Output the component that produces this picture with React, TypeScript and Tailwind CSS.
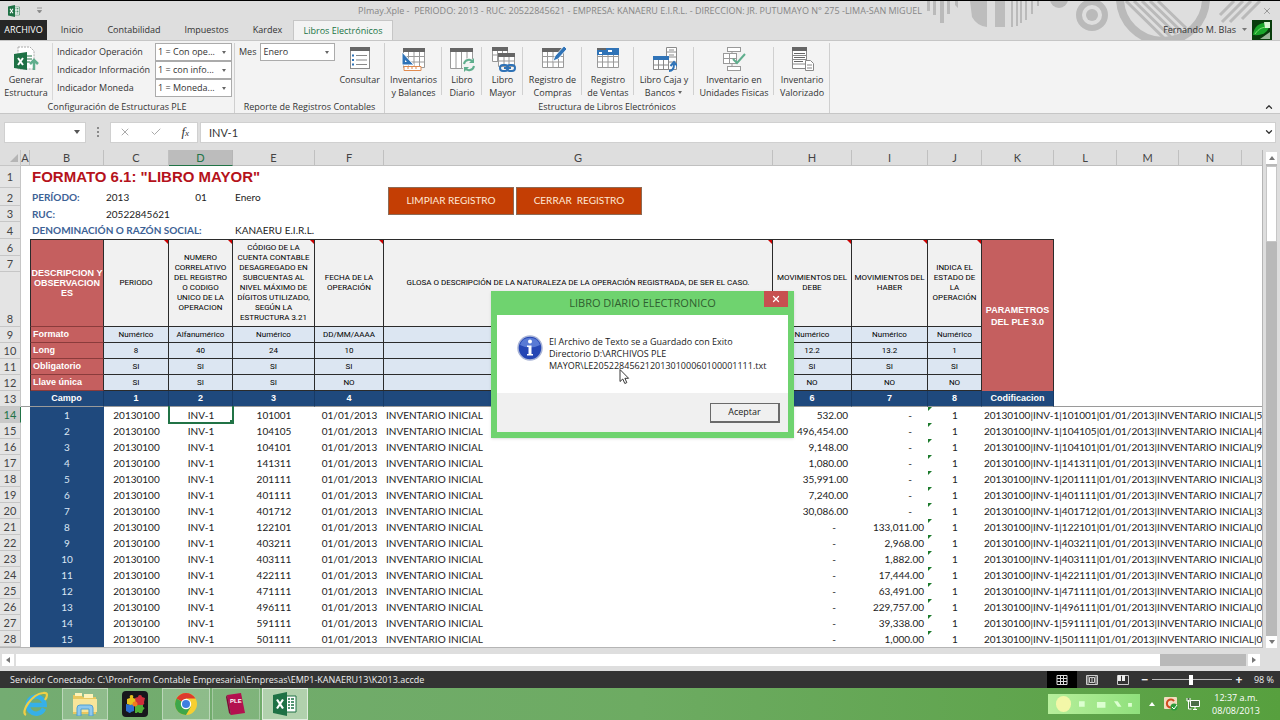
import React from "react";
import { Check, ChevronDown, ChevronUp, X } from "lucide-react";

type Row = {
  campo: number;
  cuenta: string;
  debe: string;
  haber: string;
  tail: string;
};

const App = () => {
  return (
    <div className="relative flex min-h-screen flex-col overflow-hidden bg-[#dedede] font-['Open_Sans',sans-serif] text-[9px] text-[#333]">
      <TitleBar />
      <Ribbon />
      <FormulaBar />
      <Sheet />
      <HorizontalScroll />
      <StatusBar />
      <TaskBar />
      <MessageBox />
      <svg
        className="absolute left-[619px] top-[369px] h-4 w-3"
        viewBox="0 0 12 16"
        aria-hidden="true"
      >
        <path
          d="M1 0.5V12.5L3.8 10L5.8 14.5L7.8 13.6L5.9 9.3H9.6Z"
          fill="#fff"
          stroke="#222"
          strokeWidth="0.9"
        />
      </svg>
    </div>
  );
};

export default App;

const TitleBar = () => {
  return (
    <header className="relative border-t border-black">
      <svg
        className="absolute right-0 top-0 h-[39px] w-[360px]"
        viewBox="0 0 360 39"
        fill="#bababa"
        aria-hidden="true"
      >
        <path d="M7 0h3v10H7zM13 0h3v14h-3zM20 0h4v22h-4zM27 0h3v13h-3zM35 0h3v7l-3-3z" />
        <path d="M46 0H67V26Q57 25 52 16L50 0ZM75 0H85V26H75Z" opacity=".95" />
        <path d="M91 0h2v26h-2zM96 0h2v25h-2zM100 0h2v22h-2zM105 0h2v19h-2zM111 0h2v13h-2zM117 0h2v5h-2z" />
        <circle cx="139" cy="-2" r="9" />
        <circle cx="172" cy="14" r="13" fill="none" stroke="#bababa" strokeWidth="6" />
        <circle cx="172" cy="14" r="6" />
        <circle cx="243" cy="-3" r="43" fill="none" stroke="#bababa" strokeWidth="8" />
        <g stroke="#bababa" strokeWidth="3" fill="none">
          <path d="M206 0L246 39M214 0L252 37M222 0L256 33M230 0L262 31M238 0L266 27" />
          <path d="M300 14L314 0M302 21L323 0M310 21L331 0M322 18L340 0" />
        </g>
      </svg>

      <div className="relative flex h-[19px] items-center">
        <div className="flex w-48 items-center gap-4 pl-2">
          <ExcelMark className="h-3 w-3" />
          <svg className="h-2 w-2" viewBox="0 0 8 8" aria-hidden="true">
            <path d="M1 1h5M1.500 3.500h4L3.500 6z" fill="#888" stroke="#888" strokeWidth=".8" />
          </svg>
        </div>
        <h1 className="flex-1 whitespace-pre text-center text-[#868686]">
          PImay.Xple -  PERIODO: 2013 - RUC: 20522845621 - EMPRESA: KANAERU E.I.R.L. - DIRECCION: JR. PUTUMAYO N° 275 -LIMA-SAN MIGUEL
        </h1>
        <div className="flex w-48 justify-end pr-2">
          <button aria-label="Cerrar">
            <X className="h-2.5 w-2.5 text-[#8a8a8a]" />
          </button>
        </div>
      </div>

      <nav className="relative flex h-5 items-end">
        <a href="#archivo" className="flex h-5 w-[47px] items-center justify-center bg-[#262626] text-white">
          ARCHIVO
        </a>
        <a href="#inicio" className="flex h-5 w-[50px] items-center justify-center">Inicio</a>
        <a href="#contabilidad" className="flex h-5 w-[74px] items-center justify-center">Contabilidad</a>
        <a href="#impuestos" className="flex h-5 w-[71px] items-center justify-center">Impuestos</a>
        <a href="#kardex" className="flex h-5 w-[51px] items-center justify-center">Kardex</a>
        <a
          href="#libros"
          className="flex h-5 w-[100px] items-center justify-center border-x border-t border-[#c6c6c6] bg-[#f3f3f3] text-[#217346]"
        >
          Libros Electrónicos
        </a>
        <div className="ml-auto flex items-center gap-1 pr-2">
          <button className="flex items-center gap-1">
            Fernando M. Blas
            <svg className="h-1 w-2" viewBox="0 0 8 4" aria-hidden="true">
              <path d="M2 0h5L4.500 3z" fill="#777" />
            </svg>
          </button>
          <svg className="h-5 w-5" viewBox="0 0 20 20" aria-hidden="true">
            <rect width="20" height="20" fill="#083d0c" />
            <path d="M1 15C2 6 8 2 17 3C18 11 12 16 1 15Z" fill="#19a52a" />
            <path d="M3 14C7 8 11 7 17 7" stroke="#7be26f" fill="none" />
            <path d="M12 2h6v6h-5z" fill="#d8f5d3" />
            <path d="M8 19L18 12V19Z" fill="#9ab59a" />
          </svg>
        </div>
      </nav>
    </header>
  );
};

const ComboBox = ({ id, value }: { id: string; value: string }) => (
  <div className="relative">
    <select
      id={id}
      className="h-[18px] w-full appearance-none border border-[#ababab] bg-white pl-0.5 pr-3 text-[9px] text-[#333] outline-none"
    >
      <option>{value}</option>
    </select>
    <svg className="pointer-events-none absolute right-1 top-2 h-1 w-2" viewBox="0 0 8 4" aria-hidden="true">
      <path d="M2 0h4L4 3z" fill="#666" />
    </svg>
  </div>
);

const Ribbon = () => {
  return (
    <section className="flex h-[74px] border-b border-t border-[#c6c6c6] bg-[#f3f3f3]">
      <div className="mt-0.5 flex w-[235px] flex-col border-r border-[#cfcfcf]">
        <div className="flex flex-1">
          <button className="flex w-[53px] flex-col items-center gap-px border-r border-[#d8d8d8] pt-[3px]">
            <svg className="h-[26px] w-[26px]" viewBox="0 0 26 26" aria-hidden="true">
              <path d="M5 1h12l4 4v18H5z" fill="#fff" stroke="#aaa" strokeDasharray="2 1" />
              <path d="M14 10h5M14 13h5M14 16h3" stroke="#217346" />
              <path d="M1 8l13-2v18L1 22z" fill="#1e7145" />
              <path d="M5 12l5 7M10 12l-5 7" stroke="#fff" strokeWidth="2" />
              <path d="M21 24V14M17 18l4-4 4 4" stroke="#5fae8d" strokeWidth="2.500" fill="none" />
            </svg>
            <span className="leading-[13px]">Generar Estructura</span>
          </button>
          <div className="grid flex-1 grid-cols-[98px_1fr] content-start items-center pl-1 pr-0.5">
            <label htmlFor="operacion">Indicador Operación</label>
            <ComboBox id="operacion" value="1 = Con ope..." />
            <label htmlFor="informacion">Indicador Información</label>
            <ComboBox id="informacion" value="1 = con info..." />
            <label htmlFor="moneda">Indicador Moneda</label>
            <ComboBox id="moneda" value="1 = Moneda..." />
          </div>
        </div>
        <p className="text-center leading-[13px]">Configuración de Estructuras PLE</p>
      </div>

      <div className="mt-0.5 flex w-[150px] flex-col border-r border-[#cfcfcf]">
        <div className="flex flex-1">
          <div className="flex items-center gap-1 self-start pl-1">
            <label htmlFor="mes">Mes</label>
            <div className="w-[75px]">
              <ComboBox id="mes" value="Enero" />
            </div>
          </div>
          <button className="flex flex-1 flex-col items-center gap-px pt-[3px]">
            <svg className="h-[26px] w-[26px]" viewBox="0 0 26 26" aria-hidden="true">
              <rect x="3.500" y="1.500" width="19" height="21" fill="#fff" stroke="#8a8a8a" />
              <path d="M3 1h20v4H3z" fill="#666" />
              <path d="M9 9.500h11M9 14h11M9 18.500h11" stroke="#888" />
              <path d="M5 9.500h2M5 14h2M5 18.500h2" stroke="#2f73b7" strokeWidth="2" />
            </svg>
            <span className="leading-[13px]">Consultar</span>
          </button>
        </div>
        <p className="text-center leading-[13px]">Reporte de Registros Contables</p>
      </div>

      <div className="mt-0.5 flex w-[445px] flex-col border-r border-[#cfcfcf]">
        <div className="flex flex-1">
          <BookButton width="w-[57px]" lines={["Inventarios", "y Balances"]}>
            <TableGrid />
            <path d="M1 6v13h12z" fill="#2f73b7" stroke="#fff" />
            <path d="M4 14v2h2z" fill="#fff" />
            <path d="M3 20.500h17v4H3zM7 20v3M11 20v3M15 20v3" fill="#fff" stroke="#e08a4f" />
          </BookButton>
          <BookButton width="w-10" lines={["Libro", "Diario"]}>
            <path d="M1.500 3.500h22v19h-22zM7 4v18M12.500 4v18M18 4v18" fill="#fff" stroke="#999" />
            <path d="M1 2h23v4H1z" fill="#666" />
            <circle cx="20" cy="19" r="7" fill="#f3f3f3" />
            <path d="M15 18a5 5 0 0 1 9-2M25 20a5 5 0 0 1-9 2" fill="none" stroke="#5fae8d" strokeWidth="2" />
            <path d="M25 12v5h-5zM15 26v-5h5z" fill="#5fae8d" />
          </BookButton>
          <BookButton width="w-[41px]" lines={["Libro", "Mayor"]}>
            <path d="M2.500 2.500h15v13h-15zM7.500 3v12M12.500 3v12M2 9h15" fill="#fff" stroke="#999" />
            <path d="M2 1h16v4H2z" fill="#666" />
            <path d="M8.500 8.500h16v12h-16zM14 9v11M19 9v11M8 15h16" fill="#fff" stroke="#999" />
            <path d="M8 7h17v4H8z" fill="#666" />
            <g fill="none" stroke="#2f73b7" strokeWidth="2">
              <rect x="10" y="19" width="8" height="6" rx="3" />
              <rect x="17" y="19" width="8" height="6" rx="3" />
              <path d="M14 22h7" />
            </g>
          </BookButton>
          <BookButton width="w-[59px]" lines={["Registro de", "Compras"]}>
            <TableGrid />
            <path d="M13 15l2-5L24 0l3 3-9 10z" fill="#2f73b7" stroke="#fff" strokeWidth=".8" />
          </BookButton>
          <BookButton width="w-[52px]" lines={["Registro", "de Ventas"]}>
            <TableGrid />
            <path d="M2 9V4h9V2h13v7z" fill="#2f73b7" />
            <path d="M4 6h3v2H4zM13 4h4v2h-4z" fill="#fff" />
          </BookButton>
          <BookButton width="w-[60px]" lines={["Libro Caja y", "Bancos"]} arrow>
            <path d="M15.500 1.500h10v22h-10zM15 6h10M15 11h10M15 16h10M18 4h5M18 9h5" fill="#fff" stroke="#8a8a8a" />
            <path d="M2.500 10.500h15v13h-15zM7.500 11v12M12.500 11v12M2 19h15" fill="#fff" stroke="#888" />
            <path d="M2 10h16v4H2z" fill="#2f73b7" />
            <path d="M18 25q5 0 5-7M19.500 20l3.500-4 3.500 4" fill="none" stroke="#2f73b7" strokeWidth="2" />
          </BookButton>
          <BookButton width="w-20" lines={["Inventario en", "Unidades Fisicas"]}>
            <g fill="#fff" stroke="#999">
              <rect x="6.500" y="1.500" width="13" height="4" />
              <rect x="2.500" y="7.500" width="13" height="10" />
              <rect x="6.500" y="20.500" width="13" height="4" />
              <path d="M2 12.500h13M8.500 8v9M11 6v2M11 18v2" />
            </g>
            <path d="M12 13l4 4 8-9" fill="none" stroke="#5fae8d" strokeWidth="2" />
          </BookButton>
          <BookButton width="w-14" lines={["Inventario", "Valorizado"]} last>
            <path d="M3.500 1.500h14v21h-14zM3 9.500h14M3 13.500h14M3 18h14" fill="#fff" stroke="#888" />
            <path d="M3 1h15v4H3zM5 7h11v1H5zM5 11h11v1H5zM5 15h9v1H5z" fill="#666" />
            <path d="M16.500 14.500h5l3 3v7h-8zM18 19h5M18 22h5" fill="#fff" stroke="#888" />
          </BookButton>
        </div>
        <p className="text-center leading-[13px]">Estructura de Libros Electrónicos</p>
      </div>

      <button className="ml-auto mr-1.5 self-end pb-px" aria-label="Contraer la cinta">
        <ChevronUp className="h-2.5 w-2.5" strokeWidth={3} />
      </button>
    </section>
  );
};

const TableGrid = () => (
  <>
    <path d="M2.500 3.500h21v18h-21zM7.500 4v17M13 4v17M18.500 4v17M2 10.500h21M2 16h21" fill="#fff" stroke="#999" />
    <path d="M2 2h22v4H2z" fill="#666" />
  </>
);

const BookButton = ({
  width,
  lines,
  arrow,
  last,
  children,
}: {
  width: string;
  lines: string[];
  arrow?: boolean;
  last?: boolean;
  children: React.ReactNode;
}) => (
  <button className={`relative flex ${width} shrink-0 flex-col items-center whitespace-nowrap pt-[3px]`}>
    <svg className="mb-px h-[26px] w-[26px]" viewBox="0 0 26 26" aria-hidden="true">
      {children}
    </svg>
    <span className="leading-[13px]">{lines[0]}</span>
    <span className="flex items-center gap-0.5 leading-[13px]">
      {lines[1]}
      {arrow && (
        <svg className="h-1 w-1.5" viewBox="0 0 6 4" aria-hidden="true">
          <path d="M1 0h4L3 3z" fill="#666" />
        </svg>
      )}
    </span>
    {!last && <span className="absolute right-0 top-1 h-12 w-px bg-[#d0d0d0]"></span>}
  </button>
);

const FormulaBar = () => {
  return (
    <section className="flex h-9 items-center gap-2 px-1">
      <div className="flex h-[21px] w-[82px] items-center border border-[#d0d0d0] bg-white">
        <input aria-label="Cuadro de nombres" className="w-0 flex-1 outline-none" />
        <button aria-label="Nombres" className="px-1">
          <svg className="h-1 w-2" viewBox="0 0 8 4" aria-hidden="true">
            <path d="M1 0h6L4 4z" fill="#555" />
          </svg>
        </button>
      </div>
      <svg className="h-3 w-2" viewBox="0 0 8 12" aria-hidden="true">
        <path d="M3 1h2v2H3zM3 5h2v2H3zM3 9h2v2H3z" fill="#8a8a8a" />
      </svg>
      <div className="flex flex-1 gap-0.5">
        <div className="flex h-[21px] w-[88px] items-center justify-between border border-[#d0d0d0] bg-white px-2">
          <button aria-label="Cancelar">
            <X className="h-3 w-3 text-[#aaa]" />
          </button>
          <button aria-label="Introducir">
            <Check className="h-3 w-3 text-[#aaa]" />
          </button>
          <button className="font-['Liberation_Serif',serif] text-[13px] italic leading-4">
            f<span className="text-[9px]">x</span>
          </button>
        </div>
        <div className="flex h-[21px] flex-1 items-center border border-[#d0d0d0] bg-white">
          <input
            aria-label="Barra de fórmulas"
            defaultValue="INV-1"
            className="h-full w-0 flex-1 pl-2 font-['Lato',sans-serif] text-[11px] outline-none"
          />
          <button aria-label="Expandir" className="px-px">
            <ChevronDown className="h-2.5 w-2.5" strokeWidth={3} />
          </button>
        </div>
      </div>
    </section>
  );
};

const RowNumber = ({ n, active }: { n: number; active?: boolean }) => (
  <th
    scope="row"
    className={`border-b border-r p-0 text-center text-[11px] font-normal leading-[15px] ${
      n === 1 ? "align-middle" : "align-bottom"
    } ${
      active
        ? "border-b-[#c9c9c9] border-r-[#217346] bg-[#c9c9c9] text-[#217346]"
        : "border-[#c6c6c6] bg-[#e4e4e4] text-[#444]"
    }`}
  >
    {n}
  </th>
);

const labelClass = "p-0 pl-0.5 text-left text-[10px] leading-[15px] font-bold text-[#3d6296]";
const headClass =
  "relative border-b border-r border-t border-[#2b2b2b] bg-[#f1f1f1] px-px py-0 text-center align-middle font-['Roboto',sans-serif] text-[8px] font-normal leading-[10px] text-black";
const sideClass =
  "border-b border-l border-r border-b-[#8a3b3b] border-l-[#2b2b2b] border-r-[#2b2b2b] bg-[#c55f5f] p-0 pl-0.5 text-left font-['Liberation_Sans',sans-serif] text-[9px] font-bold leading-[15px] text-white";
const specClass =
  "border-b border-r border-[#2b2b2b] bg-[#dce6f2] p-0 text-center font-['Roboto',sans-serif] text-[8px] leading-[15px] text-black";
const campoClass =
  "border-b border-r border-b-[#9a9a9a] border-r-[#173a66] bg-[#1f497d] p-0 text-center font-['Liberation_Sans',sans-serif] text-[9px] font-bold leading-[15px] text-white";

const Sheet = () => {
  return (
    <main className="flex font-['Lato',sans-serif]">
      <div className="min-w-0 flex-1 border-b border-r border-[#b5b5b5] bg-white">
        <table className="w-full table-fixed border-separate border-spacing-0 text-[10px] text-[#222]">
          <colgroup>
            <col className="w-[21px]" />
            <col className="w-[9px]" />
            <col className="w-[74px]" />
            <col className="w-[65px]" />
            <col className="w-[64px]" />
            <col className="w-[82px]" />
            <col className="w-[69px]" />
            <col className="w-[389px]" />
            <col className="w-[79px]" />
            <col className="w-[76px]" />
            <col className="w-[54px]" />
            <col className="w-[72px]" />
            <col className="w-[63px]" />
            <col className="w-[62px]" />
            <col className="w-[63px]" />
            <col />
          </colgroup>
          <thead>
            <tr className="h-4">
              <td className="border-b border-r border-[#c6c6c6] bg-[#dedede] p-0">
                <svg className="ml-auto h-3 w-3" viewBox="0 0 12 12" aria-hidden="true">
                  <path d="M10 2v8H2z" fill="#b5b5b5" />
                </svg>
              </td>
              {columns.map((col) => (
                <th
                  key={col}
                  scope="col"
                  className={`border-b border-r p-0 text-center text-[11px] font-normal leading-[15px] ${
                    col === "D"
                      ? "border-b-[#217346] border-r-[#b5b5b5] bg-[#bcbcbc] text-[#217346]"
                      : "border-[#c0c0c0] bg-[#dedede] text-[#444]"
                  }`}
                >
                  {col}
                </th>
              ))}
              <td className="border-b border-[#c0c0c0] bg-[#dedede] p-0"></td>
            </tr>
          </thead>
          <tbody>
            <tr className="h-[22px]">
              <RowNumber n={1} />
              <td></td>
              <td
                colSpan={5}
                className="whitespace-nowrap p-0 pl-0.5 align-middle font-['Liberation_Sans',sans-serif] text-[15px] font-bold leading-5 text-[#b5121b]"
              >
                FORMATO 6.1: "LIBRO MAYOR"
              </td>
              <td rowSpan={4} className="p-0 pb-1 pl-1 align-middle">
                <div className="flex gap-0.5">
                  <button className="h-7 w-[126px] border border-[#8d6a55] bg-[#c43e04] text-[10px] text-[#ffe9d6]">
                    LIMPIAR REGISTRO
                  </button>
                  <button className="h-7 w-[126px] whitespace-pre border border-[#8d6a55] bg-[#c43e04] text-[10px] text-[#ffe9d6]">
                    CERRAR  REGISTRO
                  </button>
                </div>
              </td>
              <td colSpan={8}></td>
            </tr>
            <tr className="h-[18px]">
              <RowNumber n={2} />
              <td></td>
              <th className={labelClass}>PERÍODO:</th>
              <td className="p-0 pl-0.5">2013</td>
              <td className="p-0 text-center">01</td>
              <td className="p-0 pl-0.5">Enero</td>
              <td colSpan={9}></td>
            </tr>
            <tr className="h-4">
              <RowNumber n={3} />
              <td></td>
              <th className={labelClass}>RUC:</th>
              <td className="p-0 pl-0.5">20522845621</td>
              <td colSpan={11}></td>
            </tr>
            <tr className="h-[17px]">
              <RowNumber n={4} />
              <td></td>
              <th colSpan={3} className={`${labelClass} whitespace-nowrap`}>
                DENOMINACIÓN O RAZÓN SOCIAL:
              </th>
              <td colSpan={2} className="p-0 pl-0.5">KANAERU E.I.R.L.</td>
              <td colSpan={8}></td>
            </tr>
            <tr className="h-[17px]">
              <RowNumber n={6} />
              <td rowSpan={3}></td>
              <th
                rowSpan={3}
                className="border border-[#2b2b2b] border-b-[#8a3b3b] bg-[#c55f5f] p-0 text-center align-middle font-['Liberation_Sans',sans-serif] text-[9px] font-bold leading-[10px] text-white"
              >
                DESCRIPCION Y
                <br />
                OBSERVACION
                <br />
                ES
              </th>
              {headings.map((lines, i) => (
                <th key={i} rowSpan={3} className={headClass}>
                  {lines.map((line) => (
                    <span key={line} className="block whitespace-nowrap">
                      {line}
                    </span>
                  ))}
                  <svg className="absolute right-0 top-0 h-1 w-1" viewBox="0 0 4 4" aria-hidden="true">
                    <path d="M0 0h4v4z" fill="#c00" />
                  </svg>
                </th>
              ))}
              <th
                rowSpan={7}
                className="border-r border-t border-[#2b2b2b] bg-[#c55f5f] p-0 text-center align-middle font-['Liberation_Sans',sans-serif] text-[9px] font-bold leading-3 text-white"
              >
                PARAMETROS
                <br />
                DEL PLE 3.0
              </th>
              <td colSpan={4} rowSpan={7}></td>
            </tr>
            <tr className="h-4">
              <RowNumber n={7} />
            </tr>
            <tr className="h-[55px]">
              <RowNumber n={8} />
            </tr>
            {specs.map((spec) => (
              <tr key={spec.n} className="h-4">
                <RowNumber n={spec.n} />
                <td></td>
                <th scope="row" className={sideClass}>
                  {spec.label}
                </th>
                {spec.values.map((value, i) => (
                  <td key={i} className={specClass}>
                    {value}
                  </td>
                ))}
              </tr>
            ))}
            <tr className="h-4">
              <RowNumber n={13} />
              <td className="border-b border-[#9a9a9a]"></td>
              <th className={campoClass}>Campo</th>
              {["1", "2", "3", "4", "5", "6", "7", "8"].map((n) => (
                <td key={n} className={campoClass}>
                  {n}
                </td>
              ))}
              <td className={campoClass}>Codificacion</td>
              <td colSpan={4} className="border-b border-[#9a9a9a]"></td>
            </tr>
            {rows.map((row, i) => (
              <tr key={row.campo} className="h-4 leading-4">
                <RowNumber n={14 + i} active={i === 0} />
                <td></td>
                <td className="bg-[#1f497d] p-0 text-center text-[#dbe6f4]">{row.campo}</td>
                <td className="p-0 text-center">20130100</td>
                <td className="relative p-0 text-center">
                  INV-1
                  {i === 0 && (
                    <span className="absolute -left-px -top-px h-[18px] w-[66px] border-2 border-t-0 border-[#217346]">
                      <span className="absolute -bottom-0.5 -right-0.5 h-1 w-1 bg-[#217346]"></span>
                    </span>
                  )}
                </td>
                <td className="p-0 text-center">{row.cuenta}</td>
                <td className="p-0 text-center">01/01/2013</td>
                <td className="p-0 pl-0.5">INVENTARIO INICIAL</td>
                <td className={`p-0 text-right ${row.debe === "-" ? "pr-4" : "pr-1"}`}>{row.debe}</td>
                <td className={`p-0 text-right ${row.haber === "-" ? "pr-4" : "pr-1"}`}>{row.haber}</td>
                <td className="relative p-0 text-center">
                  1
                  <svg className="absolute left-0 top-0 h-1 w-1" viewBox="0 0 4 4" aria-hidden="true">
                    <path d="M0 0h4L0 4z" fill="#1c7a2c" />
                  </svg>
                </td>
                <td colSpan={5} className="overflow-hidden whitespace-nowrap p-0 pl-0.5">
                  20130100|INV-1|{row.cuenta}|01/01/2013|INVENTARIO INICIAL|{row.tail}
                </td>
              </tr>
            ))}
          </tbody>
        </table>
      </div>

      <div className="flex w-[17px] flex-col px-[3px] pt-0.5">
        <button aria-label="Subir" className="flex h-3 items-center justify-center bg-white">
          <svg className="h-1 w-2" viewBox="0 0 8 4" aria-hidden="true">
            <path d="M1 4h6L4 0z" fill="#777" />
          </svg>
        </button>
        <div className="flex-1 bg-[#b9b9b9] pt-0.5">
          <div className="h-[76px] border border-[#c6c6c6] bg-white"></div>
        </div>
        <button aria-label="Bajar" className="flex h-3 items-center justify-center bg-white">
          <svg className="h-1 w-2" viewBox="0 0 8 4" aria-hidden="true">
            <path d="M1 0h6L4 4z" fill="#777" />
          </svg>
        </button>
      </div>
    </main>
  );
};

const HorizontalScroll = () => {
  return (
    <div className="flex h-[23px] items-center gap-0.5 pl-0.5 pr-5">
      <button aria-label="Izquierda" className="flex h-3 w-3 items-center justify-center bg-white">
        <svg className="h-2 w-1" viewBox="0 0 4 8" aria-hidden="true">
          <path d="M4 1v6L0 4z" fill="#777" />
        </svg>
      </button>
      <div className="h-3 flex-1 bg-[#b9b9b9]">
        <div className="h-full w-[93%] bg-white"></div>
      </div>
      <button aria-label="Derecha" className="flex h-3 w-3 items-center justify-center bg-white">
        <svg className="h-2 w-1" viewBox="0 0 4 8" aria-hidden="true">
          <path d="M0 1v6l4-3z" fill="#777" />
        </svg>
      </button>
    </div>
  );
};

const StatusBar = () => {
  return (
    <footer className="flex h-[17px] items-center bg-[#333] pl-2.5 pr-1.5 text-[#eee]">
      <span>Servidor Conectado: C:\PronForm Contable Empresarial\Empresas\EMP1-KANAERU13\K2013.accde</span>
      <div className="ml-auto flex h-full items-center">
        <button aria-label="Normal" className="flex h-full w-[30px] items-center justify-center bg-black">
          <svg className="h-3 w-3" viewBox="0 0 12 12" aria-hidden="true">
            <path d="M1 1.500h10v9H1zM4.500 1v10M7.500 1v10M1 4.500h10M1 7.500h10" fill="none" stroke="#ddd" />
          </svg>
        </button>
        <button aria-label="Diseño de página" className="flex w-[31px] justify-center">
          <svg className="h-3 w-3" viewBox="0 0 12 12" aria-hidden="true">
            <path d="M.5 1.500h11v9H.5zM3.500 3.500h5v5h-5zM5 5h2M5 7h2M2 1v10M10 1v10" fill="none" stroke="#ccc" />
          </svg>
        </button>
        <button aria-label="Salto de página" className="flex w-[30px] justify-center">
          <svg className="h-3 w-3" viewBox="0 0 12 12" aria-hidden="true">
            <path d="M.5 1.500h11v9H.5z" fill="none" stroke="#ccc" />
            <path d="M1 1h3v6H1zM5 1h3v6H5z" fill="#eee" />
          </svg>
        </button>
        <button aria-label="Alejar" className="w-3.5 text-[12px] font-bold leading-4">−</button>
        <input
          type="range"
          aria-label="Zoom"
          defaultValue={49}
          className="h-4 w-20 appearance-none bg-transparent [&::-webkit-slider-runnable-track]:h-px [&::-webkit-slider-runnable-track]:bg-[#bbb] [&::-webkit-slider-thumb]:-mt-1 [&::-webkit-slider-thumb]:h-2.5 [&::-webkit-slider-thumb]:w-1 [&::-webkit-slider-thumb]:appearance-none [&::-webkit-slider-thumb]:bg-white"
        />
        <button aria-label="Acercar" className="w-3.5 text-[12px] font-bold leading-4">+</button>
        <span className="ml-2">98 %</span>
      </div>
    </footer>
  );
};

const TaskBar = () => {
  return (
    <nav className="flex h-8 items-stretch gap-0.5 bg-linear-to-r from-[#74ac72] via-[#6dab62] to-[#57a03e] pl-3">
      <button aria-label="Internet Explorer" className="flex w-12 items-center justify-center">
        <svg className="h-7 w-7" viewBox="0 0 28 28" aria-hidden="true">
          <path d="M22 18.500A8.500 8.500 0 1 1 22.700 15H8" fill="none" stroke="#36b0e8" strokeWidth="4.500" />
          <path d="M4 25C-2 22 10 4 21 3C27 2 25 7 23 10" fill="none" stroke="#f0cf45" strokeWidth="2.200" />
        </svg>
      </button>
      <button aria-label="Explorador" className="flex w-[46px] items-center justify-center border border-white/40 bg-white/20">
        <svg className="h-6 w-7" viewBox="0 0 28 24" aria-hidden="true">
          <path d="M2 3h8l2 2h13v17H2z" fill="#e9c75e" />
          <path d="M4 1h7v3H4zM13 2h9v4h-9z" fill="#fff3b8" />
          <path d="M2 7h24v13H2z" fill="#f8e59a" />
          <path d="M6 24v-8q0-3 3-3h10q3 0 3 3v8h-4v-7h-8v7z" fill="#8ec8ee" stroke="#4f9fd4" />
        </svg>
      </button>
      <button aria-label="Contable" className="flex w-[50px] items-center justify-center">
        <svg className="h-[26px] w-[26px]" viewBox="0 0 26 26" aria-hidden="true">
          <rect width="26" height="26" rx="4" fill="#17171c" />
          <path d="M5 8l3-1q-1-3 1.500-3t1.500 3l3 1v5l-3 1q-1 2-3 0l-3-1z" fill="#e6c21f" />
          <path d="M13 7l3-1q0-2 2-2t2 2l3 1-1 4q1 2-1 3h-7z" fill="#cf2f3a" />
          <path d="M4 13l4 1q2-1 4 0v6l-3 1q-1 2-3 0l-2-1z" fill="#2c6fd0" />
          <path d="M13 14h8v2q3 1 0 3l-1 3h-3q-1-2-2 0h-2z" fill="#4fae36" />
          <circle cx="13" cy="13" r="2.500" fill="#f07b1f" />
        </svg>
      </button>
      <button aria-label="Chrome" className="flex w-12 items-center justify-center border border-white/40 bg-white/20">
        <svg className="h-6 w-6" viewBox="0 0 24 24" aria-hidden="true">
          <circle cx="12" cy="12" r="11" fill="#f7cf31" />
          <path d="M12 12L2.500 6.500A11 11 0 0 1 21.500 6.500H12Z" fill="#dd3b2e" />
          <path d="M12 12L2.500 6.500A11 11 0 0 0 12 23L16.800 14.700Z" fill="#3ea64a" />
          <circle cx="12" cy="12" r="5.200" fill="#fff" />
          <circle cx="12" cy="12" r="4" fill="#3f7fe0" />
        </svg>
      </button>
      <button aria-label="PLE" className="flex w-12 items-center justify-center border border-white/30 bg-white/10">
        <svg className="h-6 w-6" viewBox="0 0 24 24" aria-hidden="true">
          <path d="M3 3L17 1L21 21L7 23Z" fill="#b3114f" />
          <path d="M3 3L7 23L5 21L2 5Z" fill="#7d0a36" />
          <text x="6" y="11" fontSize="6" fontWeight="bold" fill="#fff" fontFamily="Liberation Sans, sans-serif">
            PLE
          </text>
        </svg>
      </button>
      <button aria-label="Excel" className="flex w-[46px] items-center justify-center border border-white/60 bg-white/45">
        <ExcelMark className="h-6 w-6" />
      </button>

      <div className="ml-auto flex items-center gap-2 pr-4">
        <div className="flex h-5 w-[92px] items-center gap-2 bg-linear-to-r from-[#b7ef9c] to-[#8fe07c] px-2">
          <span className="h-4 w-4 rounded-full bg-[#f3f7a8]"></span>
          <svg className="h-3 w-14" viewBox="0 0 56 12" fill="#dcffd0" aria-hidden="true">
            <path d="M0 3h6v6H0zM19 4h9v6h-9zM37 3h4l4 6h-4zM52 5h4v4h-4z" />
          </svg>
        </div>
        <svg className="h-1 w-2" viewBox="0 0 8 4" aria-hidden="true">
          <path d="M1 4h6L4 0z" fill="#fff" />
        </svg>
        <svg className="h-3.5 w-3.5" viewBox="0 0 14 14" aria-hidden="true">
          <rect width="13" height="12" rx="1" fill="#f2dcc0" />
          <path d="M10 4A4 4 0 1 0 10 9" fill="none" stroke="#cf4a1f" strokeWidth="2" />
          <circle cx="10" cy="10" r="3.500" fill="#2d9a3b" />
          <path d="M8 10l2 2 3-4" fill="none" stroke="#fff" />
        </svg>
        <svg className="h-3.5 w-3.5" viewBox="0 0 14 14" aria-hidden="true">
          <path d="M4.500 3.500h9v6h-9zM7 12.500h4M9 10v2M2.500 3v9h3M1 1v3h3V1" fill="#4c6e47" stroke="#fff" />
        </svg>
        <div className="w-14 text-center leading-[13px] text-white">
          12:37 a.m.
          <br />
          08/08/2013
        </div>
      </div>
    </nav>
  );
};

const MessageBox = () => {
  return (
    <div
      role="dialog"
      aria-labelledby="dialog-title"
      className="absolute left-[491px] top-[291px] w-[303px] bg-[#6fd36f] px-1.5 pb-1.5 shadow-sm"
    >
      <div className="relative flex h-6 items-center justify-center">
        <h2 id="dialog-title" className="text-[11px] text-[#2f5f2f]">LIBRO DIARIO ELECTRONICO</h2>
        <button
          aria-label="Cerrar"
          className="absolute right-0 top-0 flex h-4 w-6 items-center justify-center bg-[#c75050]"
        >
          <X className="h-2.5 w-2.5 text-white" strokeWidth={3} />
        </button>
      </div>
      <div className="flex h-[78px] gap-1.5 bg-white pl-5 pt-5">
        <svg className="h-[26px] w-[26px] shrink-0" viewBox="0 0 26 26" aria-hidden="true">
          <circle cx="13" cy="13" r="12" fill="#2546b4" stroke="#a9b4d6" strokeWidth="1.500" />
          <path d="M3 10a10.500 10.500 0 0 1 20 0q-10 5-20 0z" fill="#6f90e3" opacity=".7" />
          <circle cx="13" cy="6.500" r="2" fill="#fff" />
          <path d="M10 10.500h4.500V19H16v1.500h-6V19h1.500v-7H10z" fill="#fff" />
        </svg>
        <p className="pt-px leading-3 text-[#222]">
          El Archivo de Texto se a Guardado con Exito
          <br />
          Directorio D:\ARCHIVOS PLE
          <br />
          MAYOR\LE2052284562120130100060100001111.txt
        </p>
      </div>
      <div className="flex h-[39px] items-center justify-end bg-[#f0f0f0] pr-2">
        <button className="h-5 w-[70px] border-b-2 border-l border-r-2 border-t border-[#6a6a6a] bg-[#f0f0f0] text-[#222]">
          Aceptar
        </button>
      </div>
    </div>
  );
};

const ExcelMark = ({ className }: { className: string }) => (
  <svg className={className} viewBox="0 0 24 24" aria-hidden="true">
    <path d="M12 4h11v16H12z" fill="#fff" stroke="#1e7145" />
    <path d="M15 7h2M15 10h2M15 13h2M15 16h2M18 7h3M18 10h3M18 13h3M18 16h3" stroke="#1e7145" strokeWidth="1.500" />
    <path d="M0 3L14 0V24L0 21Z" fill="#1e7145" />
    <path d="M4 7.500L10 16.500M10 7.500L4 16.500" stroke="#fff" strokeWidth="2.200" />
  </svg>
);

const columns = ["A", "B", "C", "D", "E", "F", "G", "H", "I", "J", "K", "L", "M", "N"];

const headings = [
  ["PERIODO"],
  ["NUMERO", "CORRELATIVO", "DEL REGISTRO", "O CODIGO", "UNICO DE LA", "OPERACION"],
  [
    "CÓDIGO DE LA",
    "CUENTA CONTABLE",
    "DESAGREGADO EN",
    "SUBCUENTAS AL",
    "NIVEL MÁXIMO DE",
    "DÍGITOS UTILIZADO,",
    "SEGÚN LA",
    "ESTRUCTURA 3.21",
  ],
  ["FECHA DE LA", "OPERACIÓN"],
  ["GLOSA O DESCRIPCIÓN DE LA NATURALEZA DE LA OPERACIÓN REGISTRADA, DE SER EL CASO."],
  ["MOVIMIENTOS DEL", "DEBE"],
  ["MOVIMIENTOS DEL", "HABER"],
  ["INDICA EL", "ESTADO DE", "LA", "OPERACIÓN"],
];

const specs = [
  {
    n: 9,
    label: "Formato",
    values: ["Numérico", "Alfanumérico", "Numérico", "DD/MM/AAAA", "", "Numérico", "Numérico", "Numérico"],
  },
  { n: 10, label: "Long", values: ["8", "40", "24", "10", "", "12.2", "13.2", "1"] },
  { n: 11, label: "Obligatorio", values: ["SI", "SI", "SI", "SI", "", "SI", "SI", "SI"] },
  { n: 12, label: "Llave única", values: ["SI", "SI", "SI", "NO", "", "NO", "NO", "NO"] },
];

const rows: Row[] = [
  { campo: 1, cuenta: "101001", debe: "532.00", haber: "-", tail: "5" },
  { campo: 2, cuenta: "104105", debe: "496,454.00", haber: "-", tail: "4" },
  { campo: 3, cuenta: "104101", debe: "9,148.00", haber: "-", tail: "9" },
  { campo: 4, cuenta: "141311", debe: "1,080.00", haber: "-", tail: "1" },
  { campo: 5, cuenta: "201111", debe: "35,991.00", haber: "-", tail: "3" },
  { campo: 6, cuenta: "401111", debe: "7,240.00", haber: "-", tail: "7" },
  { campo: 7, cuenta: "401712", debe: "30,086.00", haber: "-", tail: "3" },
  { campo: 8, cuenta: "122101", debe: "-", haber: "133,011.00", tail: "0" },
  { campo: 9, cuenta: "403211", debe: "-", haber: "2,968.00", tail: "0" },
  { campo: 10, cuenta: "403111", debe: "-", haber: "1,882.00", tail: "0" },
  { campo: 11, cuenta: "422111", debe: "-", haber: "17,444.00", tail: "0" },
  { campo: 12, cuenta: "471111", debe: "-", haber: "63,491.00", tail: "0" },
  { campo: 13, cuenta: "496111", debe: "-", haber: "229,757.00", tail: "0" },
  { campo: 14, cuenta: "591111", debe: "-", haber: "39,338.00", tail: "0" },
  { campo: 15, cuenta: "501111", debe: "-", haber: "1,000.00", tail: "0" },
];
